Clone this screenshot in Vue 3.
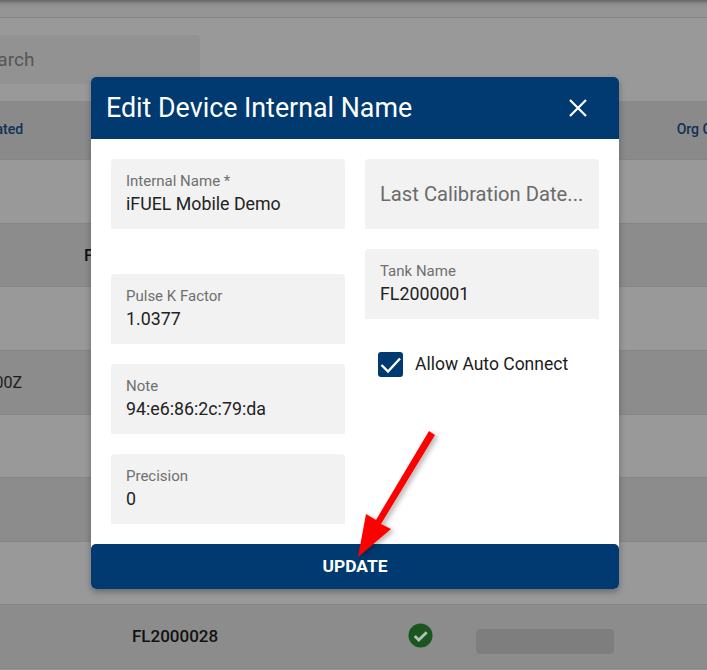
<template>
  <div class="page">
    <div class="topbar"></div>
    <div class="toolbar">
      <div class="search">Search</div>
    </div>
    <div class="table">
      <div class="row head">
        <span class="clip-ted">Created</span>
        <span class="org">Org Code</span>
      </div>
      <div class="row light"></div>
      <div class="row dark"><span class="cell-f">FL2000001</span></div>
      <div class="row light"></div>
      <div class="row dark"><span class="cell-z">2022-01-01T00:00:00Z</span></div>
      <div class="row light"></div>
      <div class="row dark"></div>
      <div class="row light"></div>
      <div class="row dark last">
        <span class="tank">FL2000028</span>
        <svg class="ok" viewBox="0 0 26 26" width="25" height="25" aria-hidden="true">
          <circle cx="13" cy="13" r="12.5" fill="#1a5522" />
          <path d="M7 13.5l4.2 4.2L19.5 9.6" fill="none" stroke="#b4bfb5" stroke-width="3" />
        </svg>
        <span class="pill"></span>
      </div>
    </div>

    <div class="modal">
      <header class="modal-head">
        <h2>Edit Device Internal Name</h2>
        <svg class="close" viewBox="0 0 18 18" width="18" height="18" aria-hidden="true">
          <path d="M1 1l16 16M17 1L1 17" stroke="#fff" stroke-width="2.2" fill="none" />
        </svg>
      </header>
      <div class="modal-body">
        <div class="col">
          <div class="field gap-large" v-for="f in [leftFields[0]]" :key="f.label">
            <label>{{ f.label }}</label>
            <div class="value">{{ f.value }}</div>
          </div>
          <div class="field" v-for="f in leftFields.slice(1)" :key="f.label">
            <label>{{ f.label }}</label>
            <div class="value">{{ f.value }}</div>
          </div>
        </div>
        <div class="col">
          <div class="field placeholder">Last Calibration Date...</div>
          <div class="field">
            <label>Tank Name</label>
            <div class="value">FL2000001</div>
          </div>
          <div class="check">
            <span class="box">
              <svg viewBox="0 0 25 25" width="25" height="25" aria-hidden="true">
                <path d="M3.5 13l6.5 6.5L22 6.5" fill="none" stroke="#fff" stroke-width="2.4" />
              </svg>
            </span>
            <span class="check-label">Allow Auto Connect</span>
          </div>
        </div>
      </div>
      <button class="update">UPDATE</button>
    </div>

    <svg class="arrow" viewBox="0 0 707 670" width="707" height="670" aria-hidden="true">
      <defs>
        <filter id="arrow-shadow" x="-30%" y="-30%" width="160%" height="160%">
          <feDropShadow dx="3" dy="2" stdDeviation="2.5" flood-color="#000" flood-opacity="0.28" />
        </filter>
      </defs>
      <polygon
        points="429,431 435,435 381,524 391,529 358,557 366,514 376,520"
        fill="#fe0000"
        filter="url(#arrow-shadow)"
      />
    </svg>
  </div>
</template>

<script setup>
const leftFields = [
  { label: 'Internal Name *', value: 'iFUEL Mobile Demo' },
  { label: 'Pulse K Factor', value: '1.0377' },
  { label: 'Note', value: '94:e6:86:2c:79:da' },
  { label: 'Precision', value: '0' },
]
</script>

<style>
html, body {
  margin: 0;
  background: #999;
  overflow: hidden;
}
</style>

<style scoped>
.page {
  position: relative;
  width: 707px;
  height: 670px;
  overflow: hidden;
  background: #999999;
  font-family: Roboto, "Liberation Sans", sans-serif;
}
.topbar {
  height: 18px;
  box-sizing: border-box;
  border-bottom: 1px solid #838383;
  background: linear-gradient(#636363 0, #7b7b7b 2px, #8d8d8d 4px, #959595 8px, #959595 100%);
}
.toolbar {
  height: 83px;
  box-sizing: border-box;
  padding: 17px 0 0;
}
.search {
  width: 222px;
  height: 49px;
  margin-left: -22px;
  box-sizing: border-box;
  display: flex;
  align-items: center;
  padding-left: 0;
  border-radius: 4px;
  background: #929292;
  color: #565656;
  font-size: 19px;
  text-indent: -2px;
}
.row {
  position: relative;
  height: 63.55px;
  box-sizing: border-box;
  border-bottom: 1px solid #858585;
}
.light { background: #999999; }
.dark { background: #8c8c8c; }
.head {
  height: 59.4px;
  padding-bottom: 2px;
  background: #8a8a8a;
  display: flex;
  justify-content: space-between;
  align-items: center;
  color: #0f3154;
  font-size: 14px;
  font-weight: 500;
}
.clip-ted {
  margin-left: -26px;
}
.org {
  margin-right: -28px;
  white-space: nowrap;
}
.cell-f, .cell-z, .tank {
  position: absolute;
  top: 50%;
  transform: translateY(-50%);
  white-space: nowrap;
  color: #111;
  font-size: 17px;
}
.cell-f { left: 84px; font-weight: 500; }
.cell-z { right: 685px; color: #1c1c1c; font-size: 16px; }
.last {
  display: flex;
  align-items: center;
}
.tank { left: 132px; font-weight: 500; }
.ok {
  position: absolute;
  left: 408px;
  top: 18px;
}
.pill {
  position: absolute;
  left: 476px;
  top: 24px;
  width: 138px;
  height: 25px;
  border-radius: 4px;
  background: #7e7e7e;
}

.modal {
  position: absolute;
  left: 91px;
  top: 77px;
  width: 528px;
  height: 512px;
  display: flex;
  flex-direction: column;
  border-radius: 5px;
  background: #fff;
  box-shadow: 0 3px 6px rgba(0, 0, 0, 0.3);
  overflow: hidden;
}
.modal-head {
  height: 62px;
  flex: none;
  box-sizing: border-box;
  padding: 0 32px 0 15px;
  display: flex;
  align-items: center;
  justify-content: space-between;
  background: #003a70;
  color: #fff;
}
.modal-head h2 {
  margin: 0;
  font-size: 26.8px;
  font-weight: 400;
}
.modal-body {
  flex: 1;
  display: grid;
  grid-template-columns: 234px 234px;
  column-gap: 20px;
  padding: 20px 20px 0;
  align-content: start;
}
.col {
  display: flex;
  flex-direction: column;
  gap: 20px;
}
.field {
  height: 70px;
  box-sizing: border-box;
  padding: 13px 15px 0;
  background: #f2f2f2;
  border-radius: 4px 4px 0 0;
}
.gap-large {
  margin-bottom: 25px;
}
.field label {
  display: block;
  color: #6f6f6f;
  font-size: 15px;
  line-height: 18px;
}
.value {
  margin-top: 3px;
  color: #222;
  font-size: 17.8px;
  line-height: 22px;
}
.placeholder {
  padding-top: 0;
  display: flex;
  align-items: center;
  color: #6b6b6b;
  font-size: 20.2px;
  white-space: nowrap;
}
.check {
  margin-top: 13px;
  padding-left: 13px;
  display: flex;
  align-items: center;
  gap: 12px;
  color: #1b1b1b;
  font-size: 17.5px;
}
.check-label {
  padding-bottom: 2px;
}
.box {
  width: 25px;
  height: 25px;
  flex: none;
  display: block;
  border-radius: 3px;
  background: #003a70;
}
.box svg {
  display: block;
}
.update {
  height: 45px;
  flex: none;
  border: 0;
  padding: 0 0 2px;
  border-radius: 5px 5px 0 0;
  background: #003a70;
  color: #fff;
  font-family: inherit;
  font-size: 17.4px;
  font-weight: 700;
}
.arrow {
  position: absolute;
  left: 0;
  top: 0;
  pointer-events: none;
}
</style>
